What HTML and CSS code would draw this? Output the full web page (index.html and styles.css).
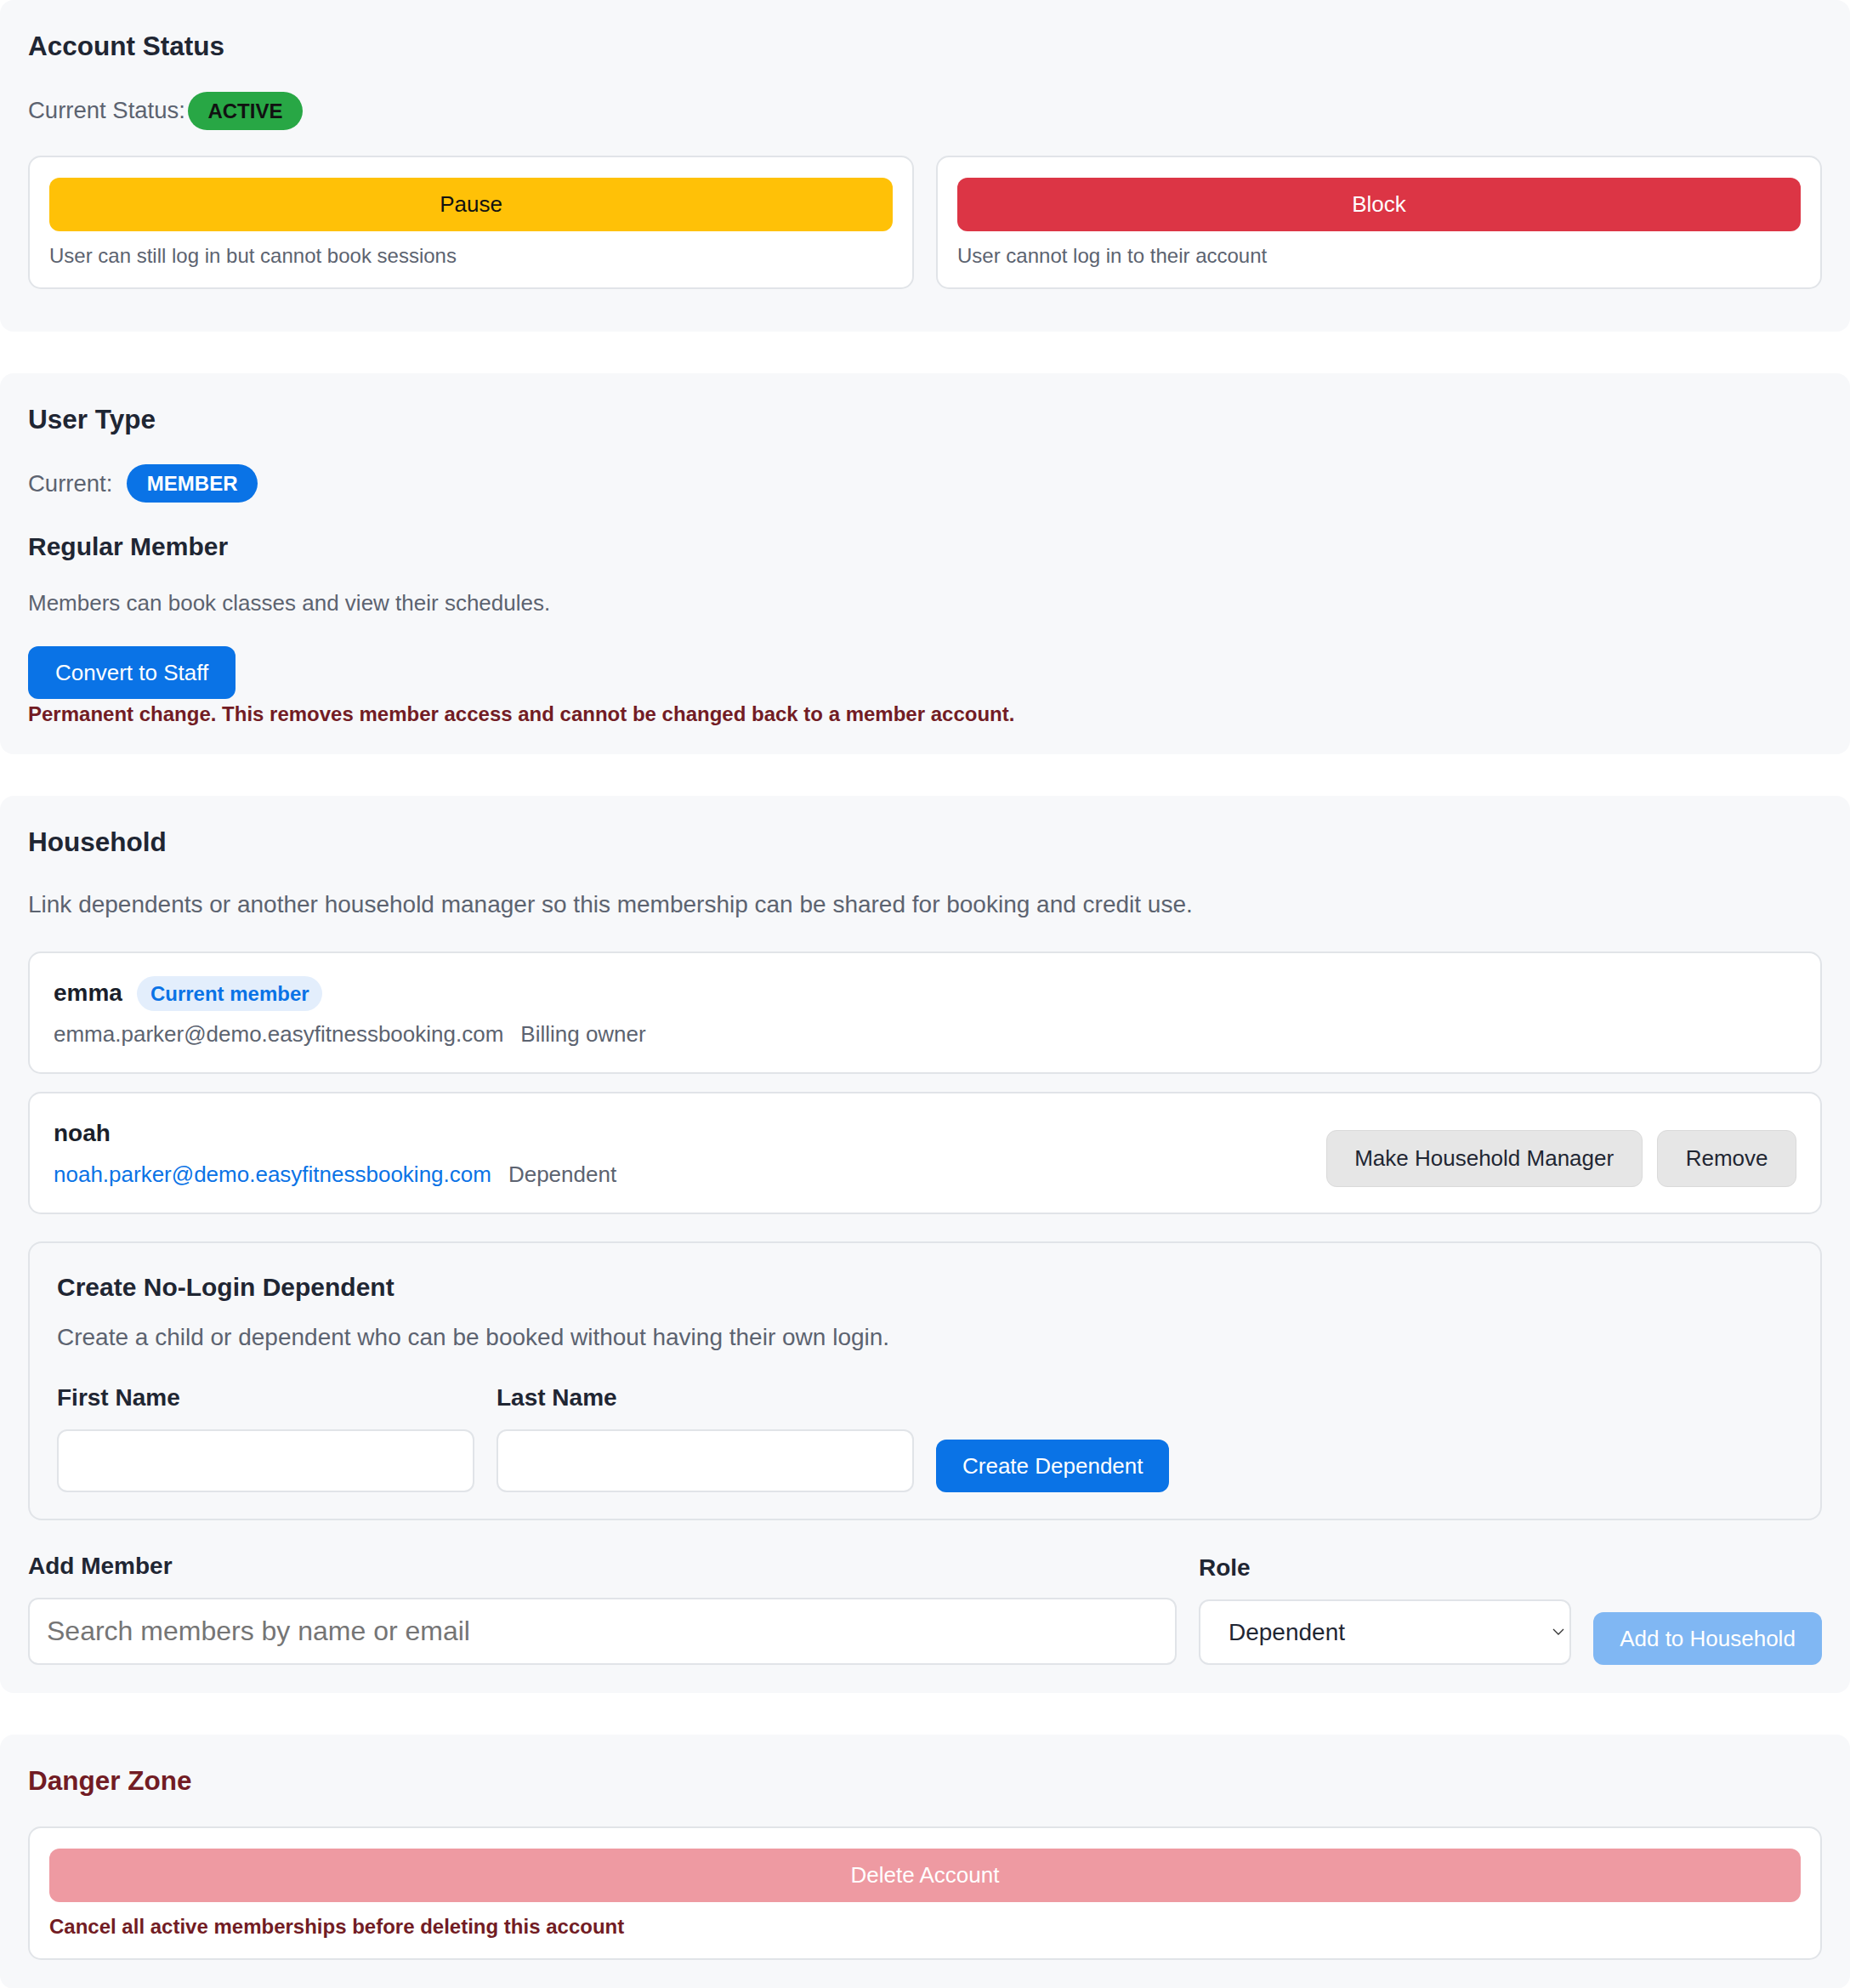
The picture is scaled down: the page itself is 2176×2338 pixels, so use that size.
FILE: index.html
```html
<!DOCTYPE html>
<html lang="en">
<head>
  <meta charset="UTF-8">
  <title>Member Account Settings</title>
  <link rel="stylesheet" href="styles.css">
</head>
<body>
  <div class="page">

    <section class="panel">
      <h2 class="panel-title">Account Status</h2>
      <div class="status-line">
        <span class="muted-label">Current Status:</span>
        <span class="pill pill-active">ACTIVE</span>
      </div>
      <div class="status-grid">
        <div class="action-card">
          <button class="btn btn-wide btn-warning">Pause</button>
          <p class="card-hint">User can still log in but cannot book sessions</p>
        </div>
        <div class="action-card">
          <button class="btn btn-wide btn-danger">Block</button>
          <p class="card-hint">User cannot log in to their account</p>
        </div>
      </div>
    </section>

    <section class="panel">
      <h2 class="panel-title">User Type</h2>
      <div class="status-line">
        <span class="muted-label">Current:</span>
        <span class="pill pill-member">MEMBER</span>
      </div>
      <h3 class="type-name">Regular Member</h3>
      <p class="type-desc">Members can book classes and view their schedules.</p>
      <div class="btn-row">
        <button class="btn btn-primary">Convert to Staff</button>
      </div>
      <p class="warn-text">Permanent change. This removes member access and cannot be changed back to a member account.</p>
    </section>

    <section class="panel">
      <h2 class="panel-title">Household</h2>
      <p class="household-intro">Link dependents or another household manager so this membership can be shared for booking and credit use.</p>

      <div class="member-list">
        <div class="member-card">
          <div class="member-info">
            <div class="member-head">
              <span class="member-name">emma</span>
              <span class="tag-current">Current member</span>
            </div>
            <div class="member-meta">
              <span>emma.parker@demo.easyfitnessbooking.com</span>
              <span>Billing owner</span>
            </div>
          </div>
        </div>

        <div class="member-card">
          <div class="member-info">
            <div class="member-head">
              <span class="member-name">noah</span>
            </div>
            <div class="member-meta">
              <a class="member-link" href="#">noah.parker@demo.easyfitnessbooking.com</a>
              <span>Dependent</span>
            </div>
          </div>
          <div class="member-actions">
            <button class="btn btn-light">Make Household Manager</button>
            <button class="btn btn-light">Remove</button>
          </div>
        </div>
      </div>

      <div class="dependent-box">
        <h3 class="box-title">Create No-Login Dependent</h3>
        <p class="box-desc">Create a child or dependent who can be booked without having their own login.</p>
        <div class="dependent-form">
          <label class="field field-fixed">
            <span class="field-label">First Name</span>
            <input class="text-input" type="text">
          </label>
          <label class="field field-fixed">
            <span class="field-label">Last Name</span>
            <input class="text-input" type="text">
          </label>
          <button class="btn btn-primary">Create Dependent</button>
        </div>
      </div>

      <div class="add-row">
        <label class="field">
          <span class="field-label">Add Member</span>
          <input class="text-input search-input" type="text" placeholder="Search members by name or email">
        </label>
        <label class="field">
          <span class="field-label">Role</span>
          <span class="select-wrap">
            <select class="role-select">
              <option>Dependent</option>
              <option>Household Manager</option>
            </select>
            <svg class="chevron" viewBox="0 0 14 8" width="14" height="8"><path d="M1 1l6 6 6-6" fill="none" stroke="#333" stroke-width="1.3"/></svg>
          </span>
        </label>
        <button class="btn btn-add" disabled>Add to Household</button>
      </div>
    </section>

    <section class="panel">
      <h2 class="panel-title danger">Danger Zone</h2>
      <div class="action-card danger-card">
        <button class="btn btn-wide btn-danger-off" disabled>Delete Account</button>
        <p class="card-hint warn-strong">Cancel all active memberships before deleting this account</p>
      </div>
    </section>

  </div>
</body>
</html>
```

FILE: styles.css
```css
:root {
  --panel-bg: #f7f8fa;
  --line: #e1e4e8;
  --text: #1f2633;
  --muted: #5c6370;
  --primary: #0a73e6;
  --danger-text: #721c24;
}

* {
  box-sizing: border-box;
}

body {
  margin: 0;
  font-family: "Liberation Sans", Arial, Helvetica, sans-serif;
  color: var(--text);
  background: #fff;
}

.page {
  display: flex;
  flex-direction: column;
  gap: 49px;
}

.panel {
  background: var(--panel-bg);
  border-radius: 16px;
  padding: 36px 33px 33.5px;
}

.panel-title {
  margin: 0;
  font-size: 31.5px;
  line-height: 36px;
  font-weight: 700;
  color: var(--text);
}

.panel-title.danger {
  color: var(--danger-text);
}

/* status + type badges */
.status-line {
  display: flex;
  align-items: center;
  margin-top: 35.5px;
}

.muted-label {
  font-size: 27.5px;
  color: var(--muted);
}

.pill {
  display: inline-block;
  font-size: 24px;
  line-height: 27px;
  font-weight: 700;
  padding: 9px 23.5px;
  border-radius: 23px;
}

.pill-active {
  margin-left: 3px;
  background: #28a745;
  color: #111;
}

.pill-member {
  margin-left: 17px;
  background: var(--primary);
  color: #fff;
}

.status-grid {
  display: grid;
  grid-template-columns: 1fr 1fr;
  gap: 26px;
  margin: 30px 0 16px;
}

.action-card {
  background: #fff;
  border: 2px solid var(--line);
  border-radius: 15px;
  padding: 24px 23px;
}

.card-hint {
  margin: 15px 0 0;
  font-size: 24px;
  line-height: 27.6px;
  color: var(--muted);
}

/* buttons */
.btn {
  font-family: inherit;
  font-size: 26px;
  line-height: 30px;
  border: none;
  border-radius: 12px;
  padding: 16px 31px;
  cursor: pointer;
}

.btn-wide {
  display: block;
  width: 100%;
  padding: 16.5px 0;
}

.btn-warning {
  background: #ffc107;
  color: #111;
}

.btn-danger {
  background: #dc3545;
  color: #fff;
}

.btn-danger-off {
  background: #ee9aa2;
  color: #fff;
  cursor: default;
}

.btn-primary {
  background: var(--primary);
  color: #fff;
}

.btn-light {
  background: #e6e6e6;
  border: 1px solid #dadada;
  color: var(--text);
  padding: 17.5px 32.5px;
}

.btn-add {
  background: #80b7f3;
  color: #fff;
  padding: 16px 30.5px;
  cursor: default;
}

.btn-row {
  display: flex;
  margin-top: 36px;
}

.btn-row .btn {
  padding: 16px 32px;
}

/* user type */
.type-name {
  margin: 35px 0 0;
  font-size: 30px;
  line-height: 34.5px;
}

.type-desc {
  margin: 33.5px 0 0;
  font-size: 26px;
  line-height: 30px;
  color: var(--muted);
}

.warn-text {
  margin: 4px 0 0;
  font-size: 24px;
  line-height: 27.6px;
  font-weight: 700;
  color: var(--danger-text);
}

/* household */
.household-intro {
  margin: 39.5px 0 0;
  font-size: 28px;
  line-height: 32px;
  color: var(--muted);
}

.member-list {
  display: flex;
  flex-direction: column;
  gap: 21px;
  margin-top: 39px;
}

.member-card {
  display: flex;
  align-items: flex-end;
  justify-content: space-between;
  background: #fff;
  border: 2px solid var(--line);
  border-radius: 15px;
  padding: 27px 28px 30px;
}

.member-head {
  display: flex;
  align-items: center;
  min-height: 41px;
}

.member-name {
  font-size: 28px;
  font-weight: 700;
  color: #1a1f2b;
}

.tag-current {
  margin-left: 17.5px;
  font-size: 24px;
  line-height: 27px;
  font-weight: 700;
  padding: 7px 15.5px;
  border-radius: 21px;
  background: #e3eefc;
  color: var(--primary);
}

.member-meta {
  display: flex;
  gap: 20px;
  margin-top: 12px;
  font-size: 26px;
  line-height: 30px;
  color: var(--muted);
}

.member-link {
  color: var(--primary);
  text-decoration: none;
}

.member-actions {
  display: flex;
  gap: 17.5px;
}

.dependent-box {
  margin-top: 32px;
  background: var(--panel-bg);
  border: 2px solid var(--line);
  border-radius: 16px;
  padding: 35px 32px 31px;
}

.box-title {
  margin: 0;
  font-size: 30px;
  line-height: 34.5px;
}

.box-desc {
  margin: 25.5px 0 0;
  font-size: 28px;
  line-height: 32px;
  color: var(--muted);
}

.dependent-form {
  display: flex;
  align-items: flex-end;
  gap: 26px;
  margin-top: 39px;
}

.field {
  display: flex;
  flex-direction: column;
}

.field-fixed {
  width: 491px;
}

.field-label {
  font-size: 28px;
  line-height: 32px;
  font-weight: 700;
  margin-bottom: 21px;
}

.text-input {
  height: 74px;
  font-family: inherit;
  font-size: 28px;
  color: var(--text);
  background: #fff;
  border: 2px solid var(--line);
  border-radius: 12px;
  padding: 0 20px;
}

.search-input {
  height: 79px;
  font-size: 32px;
}

.search-input::placeholder {
  color: #757575;
}

.add-row {
  display: grid;
  grid-template-columns: 1fr 438px 269px;
  gap: 26px;
  align-items: end;
  margin-top: 38px;
}

.select-wrap {
  position: relative;
  display: block;
}

.role-select {
  display: block;
  width: 100%;
  height: 77px;
  appearance: none;
  font-family: inherit;
  font-size: 28px;
  color: var(--text);
  background: #fff;
  border: 2px solid var(--line);
  border-radius: 12px;
  padding: 0 33px;
}

.chevron {
  position: absolute;
  right: 8px;
  top: 50%;
  margin-top: -4px;
}

/* danger zone */
.danger-card {
  margin-top: 35.5px;
}

.warn-strong {
  font-weight: 700;
  color: var(--danger-text);
}
```
